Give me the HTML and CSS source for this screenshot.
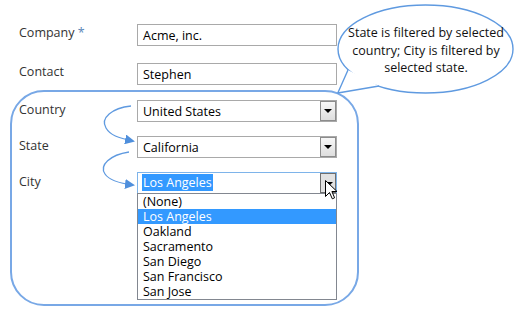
FILE: index.html
```html
<!DOCTYPE html>
<html>
<head>
    <meta charset="UTF-8">
    <title>Cascading lookups</title>
    <link rel="stylesheet" href="styles.css">
</head>
<body>
    <div class="canvas">
        <div class="form">
            <div class="row top-row company-row">
                <div class="label">Company <span class="req">*</span></div>
                <div class="field">Acme, inc.</div>
            </div>
            <div class="row top-row contact-row">
                <div class="label">Contact</div>
                <div class="field">Stephen</div>
            </div>

            <div class="group">
                <div class="row">
                    <div class="label">Country</div>
                    <div class="field select">
                        <span class="value">United States</span>
                        <span class="drop-btn"><span class="tri"></span></span>
                    </div>
                </div>
                <div class="row">
                    <div class="label">State</div>
                    <div class="field select">
                        <span class="value">California</span>
                        <span class="drop-btn"><span class="tri"></span></span>
                    </div>
                </div>
                <div class="row">
                    <div class="label">City</div>
                    <div class="field select open">
                        <span class="value"><span class="picked">Los Angeles</span></span>
                        <span class="drop-btn pressed"><span class="tri"></span></span>
                        <ul class="list">
                            <li>(None)</li>
                            <li class="selected">Los Angeles</li>
                            <li>Oakland</li>
                            <li>Sacramento</li>
                            <li>San Diego</li>
                            <li>San Francisco</li>
                            <li>San Jose</li>
                        </ul>
                        <svg class="cursor" width="13" height="20" viewBox="0 0 13 20">
                            <path d="M0.5 0.5 L0.5 16.5 L4.5 12.5 L7.3 18.8 L9.6 17.8 L6.9 11.5 L12 11.5 Z" fill="#fff" stroke="#000" stroke-width="1"/>
                        </svg>
                    </div>
                </div>
            </div>
        </div>

        <svg class="arrows" width="522" height="314" viewBox="0 0 522 314">
            <defs>
                <marker id="head" markerWidth="10" markerHeight="10" refX="8" refY="5" orient="auto" markerUnits="userSpaceOnUse">
                    <path d="M0 0 L10 5 L0 10 Z" fill="#4f8fdc"/>
                </marker>
            </defs>
            <path d="M131 106 C 112 108, 100 118, 106 128 C 110 135, 118 138, 133 141" fill="none" stroke="#5f9ae0" stroke-width="1.3" marker-end="url(#head)"/>
            <path d="M129 152 C 110 155, 99 165, 105 174 C 109 180, 117 183, 133 185" fill="none" stroke="#5f9ae0" stroke-width="1.3" marker-end="url(#head)"/>
        </svg>

        <div class="bubble">
            <svg class="bubble-shape" width="185" height="100" viewBox="0 0 185 100">
                <ellipse cx="88.5" cy="45" rx="87.5" ry="44" fill="#fff" stroke="#5f9ae0" stroke-width="1.4"/>
                <path d="M11 66 L0.8 89 L42 82" fill="#fff" stroke="#5f9ae0" stroke-width="1.4" stroke-linejoin="round"/>
            </svg>
            <div class="bubble-text">State is filtered by selected country; City is filtered by selected state.</div>
        </div>
    </div>
</body>
</html>
```

FILE: styles.css
```css
body {
    margin: 0;
    background-color: #ffffff;
    font-family: "Open Sans", "Noto Sans", sans-serif;
    font-size: 12.5px;
    color: #000;
}

.canvas {
    position: relative;
    width: 522px;
    height: 314px;
    overflow: hidden;
}

.form {
    padding-top: 24px;
}

.row {
    display: flex;
    align-items: flex-start;
    margin-bottom: 14px;
}

.top-row {
    padding-left: 19px;
}

.company-row {
    margin-bottom: 17px;
}

.contact-row {
    margin-bottom: 5px;
}

.label {
    width: 118px;
    line-height: 18px;
    color: #333;
}

.group .label {
    padding-top: 1px;
}

.req {
    color: #5b86b8;
}

.field {
    position: relative;
    box-sizing: border-box;
    width: 200px;
    height: 22px;
    border: 1px solid #a9a9a9;
    padding: 0 5px;
    line-height: 22px;
    white-space: nowrap;
}

.group {
    box-sizing: border-box;
    margin-left: 10px;
    width: 349px;
    height: 216px;
    border: 2px solid #78a8e6;
    border-radius: 34px;
    padding: 8px 0 0 7px;
}

.select .value {
    display: block;
    line-height: 21px;
}

.drop-btn {
    position: absolute;
    top: 0;
    right: 0;
    box-sizing: border-box;
    width: 16px;
    height: 20px;
    border: 1px solid #8c8c8c;
    background: linear-gradient(to bottom, #f7f7f7, #dedede);
    display: flex;
    align-items: center;
    justify-content: center;
}

.tri {
    width: 0;
    height: 0;
    border-left: 4px solid transparent;
    border-right: 4px solid transparent;
    border-top: 4px solid #000;
}

.drop-btn.pressed {
    border-color: #6f6f6f;
    background: #e2e2e2;
}

.drop-btn.pressed .tri {
    margin: 2px 0 0 2px;
}

.open {
    border-color: #7eb4ea;
    padding-left: 4px;
}

.picked {
    display: inline-block;
    background-color: #3399ff;
    color: #fff;
    line-height: 17px;
    padding: 0 1px;
    margin-top: 1px;
    vertical-align: top;
}

.list {
    position: absolute;
    top: 20px;
    left: -1px;
    width: 200px;
    box-sizing: border-box;
    margin: 0;
    padding: 0;
    list-style: none;
    background: #fff;
    border: 1px solid #828790;
}

.list li {
    height: 15px;
    line-height: 15px;
    padding-left: 5px;
}

.list li.selected {
    background-color: #3399ff;
    color: #fff;
}

.cursor {
    position: absolute;
    top: 7px;
    left: 187px;
}

.arrows {
    position: absolute;
    top: 0;
    left: 0;
    pointer-events: none;
}

.bubble {
    position: absolute;
    left: 337px;
    top: 4px;
    width: 185px;
    height: 100px;
}

.bubble-shape {
    position: absolute;
    top: 0;
    left: 0;
}

.bubble-text {
    position: absolute;
    top: 20px;
    left: 10px;
    width: 158px;
    text-align: center;
    line-height: 17.5px;
    color: #111;
}
```
